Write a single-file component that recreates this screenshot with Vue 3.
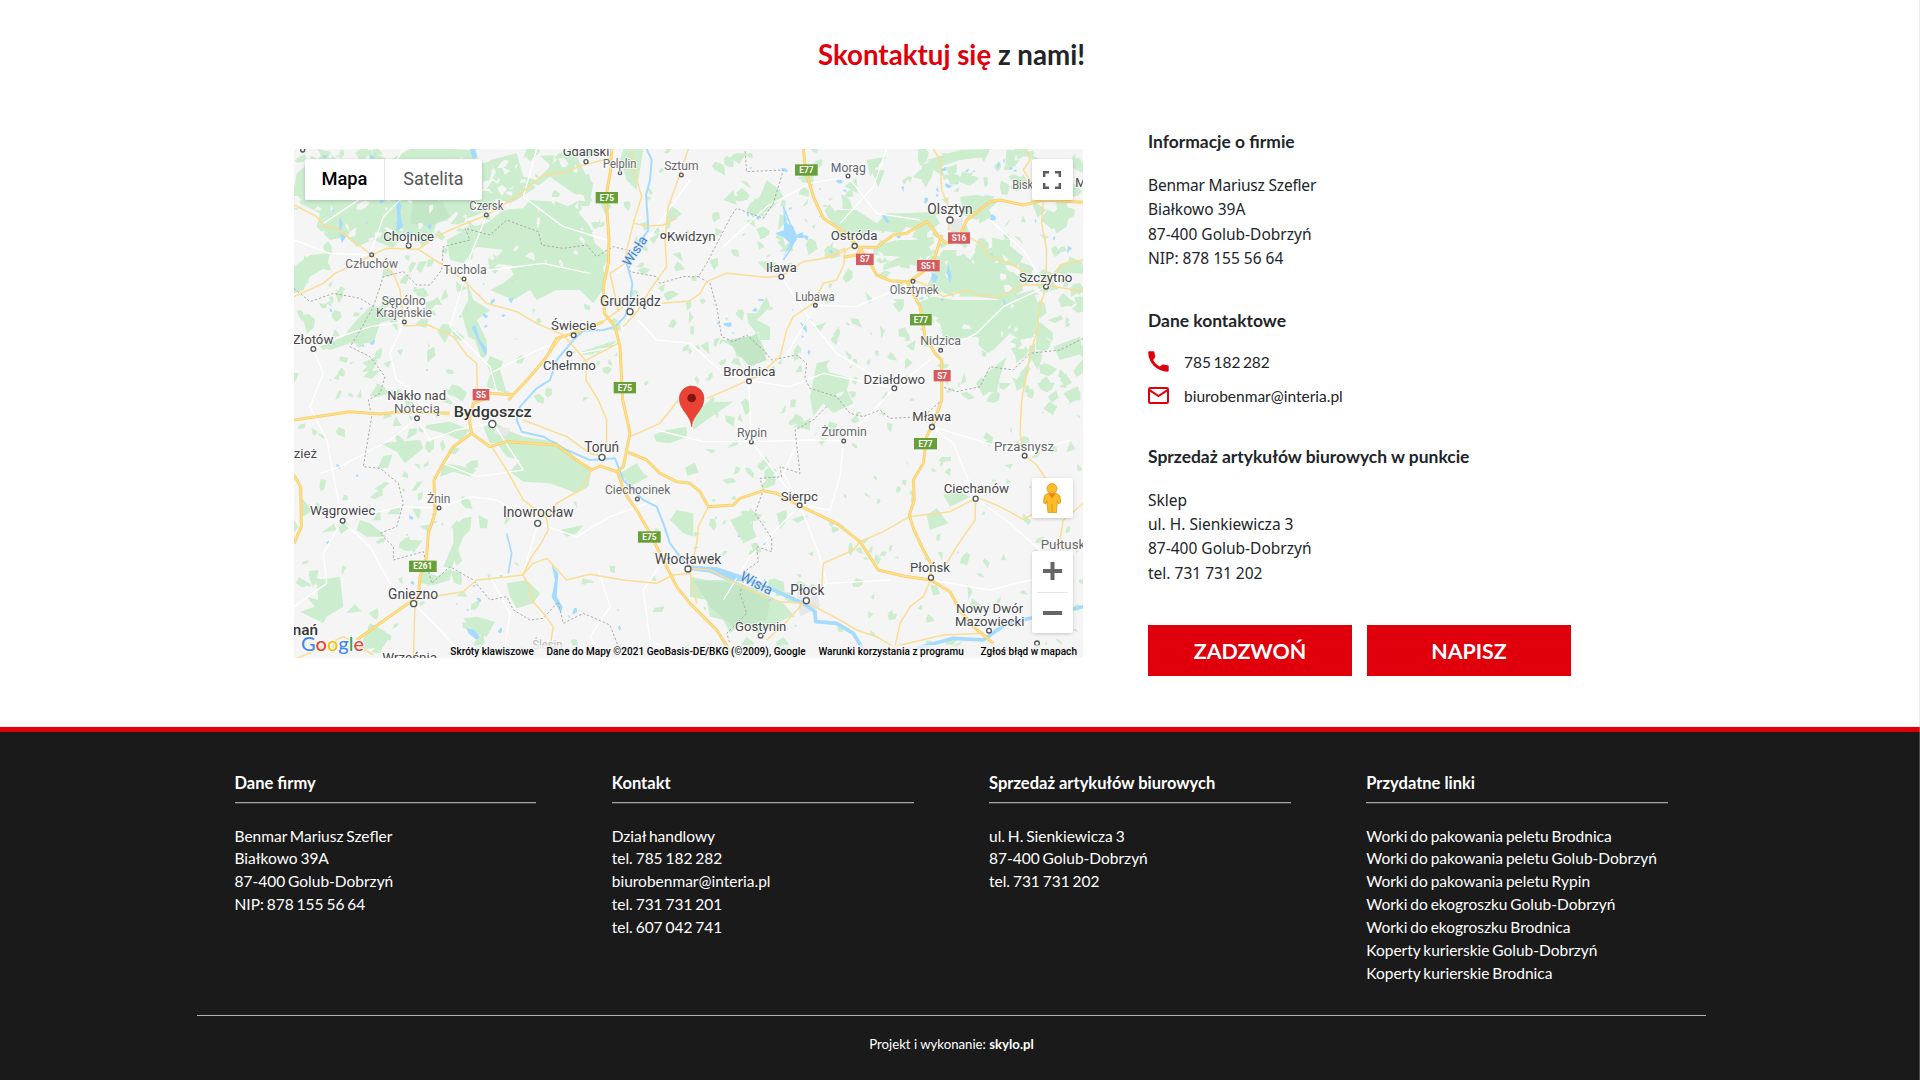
<script setup>
const major = [
  'M965 27L962 90L948 170L957 300L955 370L940 440L943 520L975 560L990 620L998 780L1016 860L1020 880L1010 930L1000 980L982 995L1005 1060L1040 1110L1080 1180L1120 1260L1160 1340L1200 1390L1240 1430L1280 1470L1325 1540',
  'M600 770L550 790L538 840L545 880L600 920L650 905L800 915L860 960L905 990L930 978L980 995',
  'M545 880L490 920L460 970L432 1020L435 1120L415 1180L410 1250L390 1310L385 1370L340 1400L270 1450L200 1500',
  'M12 840L180 815L270 822L340 815L480 820M12 1005L32 1040L34 1160L12 1210',
  'M655 780L720 710L770 650L800 595L850 580L940 545M600 760L670 765',
  'M1010 935L1070 960L1110 1000L1160 1025L1200 1030L1230 1055L1255 1100L1330 1095L1350 1075L1420 1052L1460 1060L1530 1098L1640 1150L1710 1205L1765 1290L1840 1308L1922 1320L1980 1355L2010 1410L2050 1460L2110 1510',
  'M1540 27L1547 90L1570 170L1600 235L1660 275L1710 325L1740 370L1760 405L1800 422L1850 425L1890 500L1905 590L1935 640L1955 660L1955 780L1935 840L1910 890L1900 970L1870 1020L1873 1080L1858 1125L1870 1165L1900 1230L1922 1270V1320',
  'M1660 352L1700 345L1715 322H1760L1810 285L1850 280L1880 262L1910 245L1925 260L1940 285L1970 310L2010 300M2013 280L2030 240L2100 185L2130 180L2200 195L2260 180L2380 187M1955 285L1935 350L1900 395L1855 425'
]
const minor = [
  'M12 195L80 230L105 260L140 265L200 310L245 345L200 370L135 400L100 430L12 470',
  'M245 345L290 325L385 328L430 295L480 270L590 225L680 170L760 105L830 95L880 75L960 55',
  'M385 328L450 370L520 420L590 490L680 515L740 550L820 585L890 665L888 720L925 780L950 840V930',
  'M245 345L310 400L330 450L343 558L415 555L490 590L530 645L560 670L562 755',
  'M1025 27L1035 100L1055 170L1030 250L1010 330L1005 370L960 400L985 510M1195 27L1160 130L1135 200L1125 300L1130 380L1080 450L1045 510L1000 560',
  'M1030 250L1070 258L1120 255L1160 235M1115 490L1200 483L1230 460L1250 425L1310 400L1430 412L1475 408L1540 365L1630 350L1690 318',
  'M1665 325L1663 370L1640 420L1600 430L1570 490L1510 530L1490 570L1470 650L1400 710L1320 745L1250 775M1665 325L1600 355',
  'M1930 27L1950 60L1955 150L1980 210L1975 270M2210 27L2220 60L2200 90L2260 180L2255 250L2270 330L2268 440L2250 500L2240 580L2220 640L2210 700L2195 780L2190 880L2204 947L2240 975L2270 1020',
  'M2015 280L2070 310L2100 350L2160 370L2210 400M1870 420L1920 440L1960 470L2030 450L2060 465L2130 470L2200 435L2268 435L2380 455M2270 410L2300 400L2310 375L2380 360',
  'M605 920L650 990L700 1080L770 1135L775 1170L750 1215L725 1250L698 1305L720 1340L725 1380L760 1420L790 1460L780 1520M773 1130L800 1090L870 1050L905 990',
  'M698 1305L640 1312L560 1320L520 1355L400 1375M698 1305L730 1270L770 1255L830 1320L900 1303L1000 1320L1100 1330L1150 1305L1200 1300M375 1390L370 1555M12 1560L160 1490L250 1545',
  'M1165 780L1110 850L1020 890M700 840L830 890L900 940L935 948M880 665L985 610',
  'M2057 1075L1980 1115L1858 1130L1780 1175L1710 1205L1690 1230L1600 1270L1595 1340M2057 1075L2055 1140L2000 1220L1970 1270M2070 1075L2130 1100L2200 1138L2250 1110',
  'M1922 1320L1900 1370L1860 1400L1830 1450L1815 1520M1555 1390L1650 1440L1700 1470L1760 1490L1810 1520L1960 1485L2080 1480M1540 1390L1480 1455L1430 1500',
  'M1255 1100L1225 1160L1220 1210L1200 1300L1220 1390M2310 1200L2320 1140L2380 1090M940 545L1000 500M770 650L820 585M1200 1285L1260 1290L1320 1320L1400 1360L1470 1385L1540 1390'
]
const local = [
  'M12 300L120 340L240 345L280 230L330 180L420 150L600 150M522 418L600 390L760 370L900 400M522 418L540 350L590 226M343 545L300 640L320 720L400 770L380 835L420 900L500 870L600 850',
  'M70 627L150 590L240 560L343 545M70 627L100 700L60 800L110 900L157 1142M381 835L300 900L150 980L90 1000M157 1142L240 1220L300 1330L371 1390L460 1480L520 1555M157 1142L100 1240L110 1330L12 1400M447 1104L330 1100L157 1142M447 1104L540 1070L620 1080L743 1150L860 1190L960 1130L1100 1080',
  'M743 1150L700 1300M1020 515L1100 600L1200 610L1300 700L1376 722L1500 740L1600 700L1813 745L1950 635M1020 515L980 620L840 645M1474 410L1560 540L1640 640L1813 745M1577 496L1700 500L1870 425M1376 722L1384 905L1240 905L1100 870M1384 905L1530 1095L1380 1250L1300 1380M1384 905L1560 900L1661 903L1760 800L1813 745',
  'M1661 903L1650 1010L1620 1110L1530 1095M1526 900L1480 1000L1530 1095M1926 860L1990 910L2057 1075M1926 860L2060 900L2204 947M2204 947L2340 900M2268 440L2140 500L2060 580L1950 635M2057 1075L2160 1150L2260 1240M1922 1320L2100 1350L2260 1310M1549 1380L1610 1330L1800 1320M1530 1095L1590 1250L1610 1330M1577 496L1480 660M1674 110L1560 130L1430 200L1300 320M1674 110L1760 220L1890 240M1790 27L1750 140L1650 250M2100 240L2200 330L2268 440',
  'M852 586L720 640L600 700M523 418L480 560L600 680L620 755M1200 120L1050 330L980 400M340 27L280 130L100 250M740 27L700 170L820 260L950 300M610 850L700 990L560 1010L460 970M925 1290L960 1400L900 1490L940 1555M600 1310L660 1420L640 1555M1120 1260L1060 1350L1080 1500L1180 1555'
]
const wislaUpper = 'M1070 27L1085 60L1080 120L1068 165L1072 220L1075 270L1040 320L1010 370L1027 430L1020 490L1005 530L975 560L940 570L880 572L850 600L800 660L780 720L740 745L690 800L680 840L695 875L760 890L830 930L900 960L975 955L1000 1020L1060 1080L1100 1100L1120 1150L1140 1210L1170 1250L1200 1282'
const wislaLower = 'M1200 1282L1280 1287L1350 1310L1440 1345L1540 1390L1575 1415L1577 1445L1640 1450L1690 1480L1720 1530M1880 1525L1990 1495L2080 1500L2150 1450L2380 1400'
const streams = 'M650 1180L665 1240L655 1300M1480 200L1500 250L1520 290L1500 330L1480 360'
const borders = [
  'M12 445L60 485L130 460L210 475L250 500L200 590L180 620L240 650L285 710L270 760L235 780L245 830L220 980L270 985L325 1030L340 1090L320 1160L270 1180L310 1220L310 1260L400 1235L425 1330L480 1280L550 1320L600 1380L650 1370L670 1410L720 1440L760 1435L805 1385L820 1450L880 1420L960 1455L985 1520',
  'M250 500L280 410L340 395L380 435L420 435L455 390L460 320L540 300L525 265L600 285L650 240L745 275L755 315L820 325L890 315L920 350L970 320L1010 330L1020 395L1100 410L1110 430L1180 410L1225 410L1250 370L1325 225L1340 205L1420 235L1450 190L1480 90L1370 95L1365 27',
  'M1225 410L1260 430L1280 500L1295 590L1330 605L1370 585L1420 630L1445 660L1520 645L1550 670L1545 715L1560 745L1640 770L1680 820L1720 830L1770 810L1800 835L1900 830L1955 780L1955 740L2000 755L2070 740L2100 680L2170 690L2220 640L2310 630L2380 595',
  'M1610 800L1570 840L1515 870L1530 1000L1470 980L1475 1010L1410 1015L1420 1050L1395 1120L1445 1195L1445 1235L1400 1220L1405 1265L1370 1290L1350 1360L1370 1420L1310 1480L1320 1510'
]
// Hand-traced woodland: the large complexes of the region.
const forests = [
  'M20 100L70 60L110 95L170 70L200 100L250 40L300 60L360 27L480 27L540 30L580 70L610 60L600 120L560 130L620 170L600 210L520 240L500 215L440 250L420 300L400 320L370 290L330 290L310 325L250 300L200 320L170 290L120 300L80 260L90 220L30 190L12 150Z',
  'M600 60L680 40L700 110L740 120L800 60L850 27L890 110L910 130L900 180L850 160L780 110L740 140L680 180L660 190L600 170L630 120Z',
  'M545 260L590 250L640 210L700 205L720 180L800 185L860 210L900 260L915 310L960 350L940 380L945 440L910 490L870 450L800 450L740 480L720 450L670 480L600 450L640 430L700 380L600 370L640 330L560 320L520 370L480 360L470 300Z',
  'M530 420L550 480L600 510L560 540L590 600L592 640L575 660L555 600L535 590L515 520L535 480ZM590 670L600 648L640 665L630 690L650 760L590 740L600 700Z',
  'M12 380L60 345L120 340L110 380L60 410L40 450L12 460ZM200 540L240 500L280 500L300 540L270 550L250 610L180 610L120 630L90 620L160 590Z',
  'M580 860L620 850L650 870L700 890L800 905L840 940L905 990L895 1040L860 1060L780 1030L700 1025L660 995L690 960L650 950L620 910L600 910Z',
  'M410 855L480 845L540 870L510 900L460 880L405 865ZM270 910L390 900L400 925L345 970L320 935ZM990 1000L1040 970L1060 1000L1075 1010L1020 1040L1040 1060Z',
  'M520 1135L545 1130L540 1170L520 1190L500 1240L485 1285L460 1280L490 1210L490 1160ZM565 1125L595 1140L590 1165L570 1165ZM395 1290L440 1310L485 1285L480 1320L430 1335L390 1330Z',
  'M80 1320L150 1310L160 1400L110 1430L100 1450L30 1415L75 1400L50 1370L85 1380ZM650 1330L710 1320L750 1360L730 1390L680 1405L660 1370ZM230 1480L240 1450L280 1470L300 1490L280 1520L200 1530Z',
  'M1200 1310L1250 1320L1330 1320L1400 1350L1480 1390L1515 1430L1500 1430L1400 1480L1370 1440L1320 1480L1300 1440L1260 1430L1250 1380L1200 1370ZM1140 1140L1160 1110L1210 1120L1210 1190L1180 1180Z',
  'M1370 210L1390 235L1440 210L1480 170L1470 150L1430 120L1410 170L1380 190ZM1370 520L1400 520L1430 470L1440 500L1400 540L1420 560L1400 580L1375 550Z',
  'M1290 600L1380 600L1400 575L1430 640L1410 670L1400 660L1340 650L1330 620ZM1580 670L1620 660L1600 690L1680 715L1670 750L1690 790L1630 820L1600 790L1560 840L1560 870L1510 860L1570 830L1560 770Z',
  'M1620 240L1640 210L1700 210L1760 250L1790 220L1850 220L1930 215L1950 250L1910 280L1850 260L1830 280L1760 270L1700 290L1650 270Z',
  'M1750 320L1820 300L1870 300L1930 290L1935 340L1910 350L1900 385L1850 370L1780 390L1780 375L1830 350L1750 345Z',
  'M1930 380L1960 330L2010 330L2040 360L2070 315L2140 350L2150 390L2190 410L2200 450L2150 480L2060 470L1990 470L1940 450Z',
  'M1880 490L1930 470L1990 480L2120 480L2230 450L2250 510L2230 590L2190 600L2160 580L2110 630L2060 590L1960 600L1950 550L1910 545Z',
  'M1910 60L2010 30L2100 27L2090 50L2010 60L1950 80ZM2010 170L2060 165L2130 180L2060 240L2020 225ZM2270 220L2340 210L2330 260L2300 280Z',
  'M2090 700L2150 650L2130 710L2120 760L2070 750ZM2290 620L2370 590L2380 640L2310 660ZM1210 810L1270 785L1330 785L1250 840L1210 870Z',
  'M1960 1065L2000 1050L2040 1070L1980 1100ZM1910 1125L1940 1105L1975 1150L1920 1170ZM1460 1120L1490 1110L1490 1140L1470 1170ZM1320 1140L1370 1120L1400 1190L1360 1210ZM860 640L980 600L960 625L890 645Z',
  'M460 970L500 975L560 990L540 1010L490 995L450 1010ZM210 1140L240 1150L290 1190L230 1190L200 1170ZM520 1435L560 1430L615 1445L590 1490L550 1480ZM810 1170L880 1155L860 1180L830 1190ZM1090 885L1130 870L1190 860L1190 890L1140 910L1100 905Z',
  'M1000 27L1060 27L1050 90L1040 150L1010 120L990 60ZM1730 60L1790 50L1760 80L1740 110ZM1300 180L1340 195L1330 150ZM2080 330L2150 310L2200 350L2180 380L2120 370ZM1400 540L1440 560L1440 600L1410 600Z'
]
// Deterministic scatter: small clearings and copses between the large woods.
let seed = 41
const rnd = () => ((seed = (seed * 16807) % 2147483647) / 2147483647)
const blob = (x, y, r) => {
  const n = 3 + Math.floor(rnd() * 4)
  const stretch = 0.45 + rnd() * 0.5
  const tilt = rnd() * 3
  let d = ''
  for (let i = 0; i < n; i++) {
    const a = ((i + rnd() * 0.5) / n) * 6.283
    const q = r * (0.45 + rnd() * 0.95)
    const px = Math.cos(a) * q
    const py = Math.sin(a) * q * stretch
    const gx = x + px * Math.cos(tilt) - py * Math.sin(tilt)
    const gy = y + px * Math.sin(tilt) + py * Math.cos(tilt)
    d += (i ? 'L' : 'M') + gx.toFixed(0) + ' ' + gy.toFixed(0)
  }
  return d + 'Z'
}
const scatter = (zones) => zones.map(([x, y, w, h, n, r]) => {
  let d = ''
  for (let i = 0; i < n; i++) d += blob(x + rnd() * w, y + rnd() * h, r * (0.4 + rnd() * 0.9))
  return d
}).join('')
const copses = scatter([
  [12, 27, 580, 330, 70, 24], [600, 27, 350, 450, 45, 24], [12, 350, 500, 420, 64, 21],
  [600, 480, 600, 300, 24, 16], [1000, 27, 350, 500, 38, 19], [1350, 27, 550, 380, 56, 24],
  [1880, 27, 490, 400, 85, 28], [2080, 400, 300, 380, 60, 25], [1560, 430, 500, 350, 46, 18],
  [1200, 500, 360, 300, 24, 19], [12, 780, 540, 350, 36, 22], [12, 1130, 560, 420, 36, 23],
  [580, 1050, 620, 480, 14, 15], [1150, 780, 500, 400, 32, 19], [1600, 780, 780, 480, 56, 16],
  [1500, 1230, 880, 320, 40, 17], [1200, 1120, 300, 400, 22, 20]
])
const clearings = scatter([
  [20, 50, 560, 260, 46, 18], [600, 60, 320, 330, 26, 15], [540, 430, 90, 220, 4, 9],
  [1620, 210, 300, 180, 8, 12], [1920, 300, 320, 300, 18, 13], [1300, 590, 380, 180, 8, 11]
])
const ponds = scatter([
  [100, 40, 500, 280, 14, 9], [560, 420, 120, 220, 8, 8], [1360, 60, 360, 300, 18, 10],
  [1800, 60, 540, 430, 30, 10], [1230, 480, 560, 180, 10, 9], [60, 960, 400, 420, 12, 8],
  [500, 1300, 500, 200, 10, 9], [1200, 1080, 300, 300, 6, 7], [120, 500, 400, 280, 8, 7]
])
const lakes = 'M540 27H556L562 50L548 56ZM318 180H330L332 230L340 260L318 275L322 240ZM148 230L158 250L150 280L168 290L155 310L148 270ZM545 560L556 555L570 600L590 625L588 650L575 625ZM1480 190L1490 250L1510 260L1520 300L1490 335L1475 360L1500 310L1480 290L1455 280L1482 270ZM1780 220L1800 245L1790 250L1776 228ZM1975 370L1985 410L1980 430L1970 400ZM1925 395L1945 410L1935 430L1925 420ZM1530 545L1550 560L1550 578L1538 565ZM785 1275L805 1300L800 1370L818 1400L812 1420L785 1370L795 1320ZM530 1465L550 1468L570 1490L560 1500L535 1480ZM1200 1280L1280 1283L1350 1308L1360 1325L1310 1320L1260 1298L1200 1290Z'

// text, centre x, baseline y, size, drawn width, tone
const labels = [
  ['Gdański', 888, 48, 40, 140, 2], ['Pelplin', 989, 84, 36, 100, 1], ['Czersk', 589, 209, 36, 102, 1],
  ['Chojnice', 356, 304, 40, 152, 2], ['Człuchów', 245, 384, 38, 158, 1], ['Tuchola', 525, 403, 39, 130, 1],
  ['Sępólno', 341, 495, 38, 132, 1], ['Krajeńskie', 342, 531, 38, 168, 1], ['Złotów', 69, 612, 40, 122, 2],
  ['Świecie', 851, 569, 40, 136, 2], ['Grudziądz', 1021, 499, 42, 182, 2], ['Chełmno', 838, 689, 40, 158, 2],
  ['Sztum', 1174, 91, 36, 103, 1], ['Kwidzyn', 1204, 303, 40, 146, 2], ['Morąg', 1675, 95, 38, 105, 1],
  ['Ostróda', 1692, 300, 40, 140, 2], ['Olsztyn', 1980, 221, 42, 136, 2], ['Iława', 1474, 395, 40, 92, 2],
  ['Lubawa', 1575, 484, 37, 118, 1], ['Olsztynek', 1872, 462, 37, 146, 1], ['Szczytno', 2267, 425, 40, 160, 2],
  ['Nidzica', 1952, 616, 38, 122, 1], ['Brodnica', 1378, 709, 40, 156, 2], ['Działdowo', 1813, 731, 40, 185, 2],
  ['Nakło nad', 380, 780, 40, 176, 2], ['Notecią', 381, 819, 40, 138, 1], ['Bydgoszcz', 608, 830, 46, 234, 3],
  ['Toruń', 935, 936, 42, 105, 2], ['Ciechocinek', 1043, 1062, 37, 196, 1], ['Żnin', 446, 1089, 37, 70, 1],
  ['Wągrowiec', 158, 1125, 40, 196, 2], ['Inowrocław', 745, 1131, 42, 212, 2], ['Włocławek', 1194, 1271, 42, 200, 2],
  ['Gniezno', 369, 1376, 42, 150, 2], ['Ślesin', 772, 1527, 36, 90, 0], ['Września', 359, 1566, 39, 164, 2],
  ['Rypin', 1386, 891, 38, 90, 1], ['Żuromin', 1662, 888, 38, 136, 1], ['Mława', 1925, 844, 40, 116, 2],
  ['Przasnysz', 2202, 932, 40, 180, 1], ['Ciechanów', 2059, 1058, 40, 196, 2], ['Sierpc', 1528, 1083, 40, 112, 2],
  ['Pułtusk', 2319, 1227, 39, 134, 1], ['Płońsk', 1920, 1295, 40, 120, 2], ['Płock', 1552, 1364, 42, 102, 2],
  ['Gostynin', 1412, 1473, 39, 154, 2], ['Nowy Dwór', 2099, 1419, 40, 202, 2], ['Mazowiecki', 2099, 1458, 40, 208, 2],
  ['zież', 46, 954, 39, 70, 2], ['Bisk', 2198, 147, 38, 63, 1], ['M', 2372, 142, 38, 32, 2], ['nań', 46, 1484, 44, 76, 3]
]
const towns = [
  [38, 30, 6], [888, 65, 6], [990, 99, 5], [589, 225, 5.5], [356, 317, 7], [245, 344, 5.5], [522, 417, 5.5], [343, 546, 5.5],
  [70, 627, 7], [851, 586, 7], [1020, 515, 9], [838, 641, 7], [1174, 105, 5.5], [1120, 288, 7], [1674, 108, 5.5],
  [1694, 318, 7.5], [1980, 240, 9], [1474, 410, 7], [1576, 496, 5.5], [1869, 424, 5.5], [2268, 440, 7], [1952, 631, 5.5],
  [1377, 724, 7], [1813, 745, 7], [381, 835, 7], [607, 852, 10.5], [936, 952, 9], [1042, 1077, 5.5], [447, 1104, 5.5],
  [158, 1142, 7], [743, 1150, 9], [1194, 1287, 9], [371, 1391, 9], [1384, 906, 5.5], [1661, 903, 5.5], [1926, 861, 7.5],
  [2204, 947, 7], [2057, 1076, 7.5], [1529, 1096, 7], [1923, 1313, 7.5], [1549, 1382, 9], [1412, 1487, 7], [2097, 1472, 7], [2241, 1510, 7]
]
const shields = [
  ['E75', 917, 156, 67, 1], ['E77', 1515, 73, 68, 1], ['E75', 971, 726, 67, 1], ['S5', 548, 747, 50, 0],
  ['S16', 1974, 277, 66, 0], ['S7', 1698, 341, 53, 0], ['S51', 1881, 360, 68, 0], ['E77', 1860, 522, 65, 1],
  ['S7', 1931, 690, 51, 0], ['E77', 1872, 894, 69, 1], ['E75', 1044, 1174, 68, 1], ['E261', 357, 1262, 83, 1]
]
const footer = [
  { title: 'Dane firmy', lines: ['Benmar Mariusz Szefler', 'Białkowo 39A', '87-400 Golub-Dobrzyń', 'NIP: 878 155 56 64'] },
  { title: 'Kontakt', lines: ['Dział handlowy', 'tel. 785 182 282', 'biurobenmar@interia.pl', 'tel. 731 731 201', 'tel. 607 042 741'] },
  { title: 'Sprzedaż artykułów biurowych', lines: ['ul. H. Sienkiewicza 3', '87-400 Golub-Dobrzyń', 'tel. 731 731 202'] },
  { title: 'Przydatne linki', lines: ['Worki do pakowania peletu Brodnica', 'Worki do pakowania peletu Golub-Dobrzyń', 'Worki do pakowania peletu Rypin', 'Worki do ekogroszku Golub-Dobrzyń', 'Worki do ekogroszku Brodnica', 'Koperty kurierskie Golub-Dobrzyń', 'Koperty kurierskie Brodnica'] }
]
</script>

<template>
  <div class="page">
    <main class="contact">
      <h2><span>Skontaktuj się</span> z nami!</h2>
      <div class="cols">
        <div class="map">
          <svg class="canvas" viewBox="12 27 2367 1527" preserveAspectRatio="none">
            <rect x="0" y="0" width="2400" height="1600" fill="#f5f5f5" />
            <g fill="#cdedcf">
              <path v-for="(d, i) in forests" :key="i" :d="d" />
              <path :d="copses" />
            </g>
            <path d="M370 180L440 150L480 230L420 260L360 250ZM1310 600L1400 585L1430 660L1380 680ZM1210 1320L1330 1330L1440 1380L1430 1440L1330 1460L1260 1400Z" fill="#c2e6c6" />
            <path :d="clearings" fill="#f5f5f5" />
            <path :d="ponds + lakes" fill="#a5dbff" />
            <path d="M1975 240L2020 235L2015 280L1980 270ZM1520 1350L1580 1340L1590 1400L1530 1430ZM620 860L660 865L650 890L610 880Z" fill="#e8e8e8" />
            <g fill="none" stroke-linejoin="round">
              <path v-for="(d, i) in local" :key="'l' + i" :d="d" stroke="#fff" stroke-width="4" />
              <path v-for="(d, i) in borders" :key="'b' + i" :d="d" stroke="#a9a9ab" stroke-width="3" stroke-dasharray="7 6" />
              <path :d="wislaUpper" stroke="#a5dbff" stroke-width="6" />
              <path :d="wislaLower" stroke="#a5dbff" stroke-width="11" />
              <path :d="streams" stroke="#a5dbff" stroke-width="5" />
              <path v-for="(d, i) in minor" :key="'m' + i" :d="d" stroke="#fbdd94" stroke-width="4.5" />
              <path v-for="(d, i) in major" :key="'c' + i" :d="d" stroke="#f9d06a" stroke-width="9" />
              <path v-for="(d, i) in major" :key="'f' + i" :d="d" stroke="#fde08d" stroke-width="4" />
            </g>
            <g fill="#fff" stroke="#55565a" stroke-width="4">
              <circle v-for="(t, i) in towns" :key="i" :cx="t[0]" :cy="t[1]" :r="t[2]" />
            </g>
            <g class="labels">
              <text v-for="(l, i) in labels" :key="i" :class="'tone' + l[5]" :x="l[1]" :y="l[2]" :font-size="l[3]" :textLength="l[4]" lengthAdjust="spacingAndGlyphs">{{ l[0] }}</text>
              <text class="river" transform="translate(1046 340) rotate(-56)" font-size="40">Wisła</text>
              <text class="river" transform="translate(1393 1342) rotate(27)" font-size="42">Wisła</text>
            </g>
            <g v-for="(s, i) in shields" :key="'s' + i">
              <rect :x="s[1]" :y="s[2]" :width="s[3]" height="34" :fill="s[4] ? '#689f38' : '#d85a5f'" />
              <text class="shield" :x="s[1] + s[3] / 2" :y="s[2] + 26">{{ s[0] }}</text>
            </g>
            <path d="M1205 861C1202 823 1168 812 1168 775A37 37 0 0 1 1242 775C1242 812 1208 823 1205 861Z" fill="#ea4335" stroke="#c5362b" stroke-width="1.500" />
            <circle cx="1205" cy="774" r="13" fill="#811411" />
          </svg>
          <div class="types"><b>Mapa</b><span>Satelita</span></div>
          <button class="ctl full" aria-label="fullscreen">
            <svg width="18" height="18" viewBox="0 0 18 18"><path d="M1.2 6V1.2H6M12 1.2h4.8V6M16.8 12v4.8H12M6 16.8H1.2V12" fill="none" stroke="#5c5c5c" stroke-width="2.4" /></svg>
          </button>
          <button class="ctl peg" aria-label="street view">
            <svg width="18" height="30" viewBox="0 0 18 30"><path d="M4.2 10.5h9.6L17 13l.6 7-2.4.8-.9-3-.9 11.9H5L3.900 17.800 3 20.800.6 20 1.200 13Z" fill="#fbbc27" stroke="#d8951f" stroke-width=".8" /><path d="M9 21v8" stroke="#d8951f" stroke-width="1" /><path d="M5.200 10.500h7.600L9 15.500Z" fill="#e8861b" /><circle cx="9" cy="5.600" r="5" fill="#fbbc27" stroke="#d8951f" stroke-width=".8" /></svg>
          </button>
          <div class="zoom">
            <svg width="19" height="18" viewBox="0 0 19 18"><path d="M0 9h19M9.500 0v18" stroke="#666" stroke-width="4" /></svg>
            <i></i>
            <svg width="19" height="18" viewBox="0 0 19 18"><path d="M0 9h19" stroke="#666" stroke-width="4" /></svg>
          </div>
          <div class="google"><span class="b">G</span><span class="r">o</span><span class="y">o</span><span class="b">g</span><span class="g">l</span><span class="r">e</span></div>
          <div class="legal">
            <span>Skróty klawiszowe</span><span>Dane do Mapy ©2021 GeoBasis-DE/BKG (©2009), Google</span><span>Warunki korzystania z programu</span><span class="report">Zgłoś błąd w mapach</span>
          </div>
        </div>
        <div class="info">
          <h3>Informacje o firmie</h3>
          <p><span class="name">Benmar Mariusz Szefler</span><br />Białkowo 39A<br />87-400 Golub-Dobrzyń<br />NIP: 878 155 56 64</p>
          <h3>Dane kontaktowe</h3>
          <div class="row first">
            <svg width="21" height="21" viewBox="0 0 21 21"><path d="M1 .3H5.400C6 .3 6.300.6 6.400 1.200C6.500 2.700 6.800 4 7.200 5.200C7.400 5.700 7.300 6.100 6.900 6.500L5.200 9.100C6.600 12 8.900 14.300 11.900 15.600L14.300 13.800C14.700 13.400 15.100 13.300 15.600 13.500C16.900 13.900 18.200 14.200 19.700 14.300C20.400 14.400 20.700 14.700 20.700 15.300V19.600C20.700 20.300 20.300 20.700 19.600 20.700C9 20.600.3 12 .2 1.300C.2.700.5.300 1 .3Z" fill="#df000b" /></svg>
            <span>785 182 282</span>
          </div>
          <div class="row">
            <svg width="21" height="17" viewBox="0 0 21 17"><rect x="1" y="1" width="19" height="15" rx="1.200" fill="none" stroke="#df000b" stroke-width="2" /><path d="M1.500 3.200L10.500 9L19.500 3.200" fill="none" stroke="#df000b" stroke-width="2" /></svg>
            <span>biurobenmar@interia.pl</span>
          </div>
          <h3 class="shop">Sprzedaż artykułów biurowych w punkcie</h3>
          <p class="address">Sklep<br />ul. H. Sienkiewicza 3<br />87-400 Golub-Dobrzyń<br />tel. 731 731 202</p>
          <div class="btns"><a>ZADZWOŃ</a><a>NAPISZ</a></div>
        </div>
      </div>
    </main>
    <footer>
      <div class="fcols">
        <section v-for="c in footer" :key="c.title">
          <h4>{{ c.title }}</h4>
          <div v-for="l in c.lines" :key="l" class="line">{{ l }}</div>
        </section>
      </div>
      <div class="made">Projekt i wykonanie: <b>skylo.pl</b></div>
    </footer>
  </div>
</template>

<style>
body { margin: 0; background: #fff; overflow: hidden; }
</style>
<style scoped>
.page { position: relative; width: 1920px; height: 1080px; overflow: hidden; display: flex; flex-direction: column; font-family: Lato, sans-serif; color: #212529; }
.page::after { content: ''; position: absolute; right: 0; top: 0; width: 1px; height: 100%; background: rgba(190,190,190,.3); }
.contact { height: 727px; box-sizing: border-box; border-bottom: 1px solid #f0eaea; }
h2 { margin: 0; padding-top: 38px; width: 1903px; text-align: center; font-size: 27.700px; line-height: 34px; font-weight: 700; }
h2 span { color: #df000b; }
.cols { display: flex; padding: 58px 0 0 294px; }
.map { position: relative; width: 789px; height: 509px; margin-top: 19px; overflow: hidden; font-family: Roboto, sans-serif; }
.canvas { display: block; width: 789px; height: 509px; }
.labels text { text-anchor: middle; font-family: Roboto, sans-serif; paint-order: stroke; stroke: #fff; stroke-width: 6; stroke-opacity: .7; stroke-linejoin: round; }
.labels .tone0 { fill: #b5b5b5; }
.labels .tone1 { fill: #66676b; }
.labels .tone2 { fill: #45464a; }
.labels .tone3 { fill: #333; font-weight: 500; }
.labels .river { fill: #4a80c8; stroke: #d5ecfb; }
.shield { fill: #fff; font: 700 25px Roboto, sans-serif; text-anchor: middle; }
.types { position: absolute; left: 11px; top: 10px; width: 177px; height: 41px; display: flex; line-height: 40px; font-size: 18px; background: #fff; box-shadow: 0 1px 4px -1px rgba(0,0,0,.3); color: #565656; border-radius: 2px; }
.types b { width: 79px; text-align: center; color: #000; font-weight: 500; border-right: 1px solid #e6e6e6; font-size: 18.300px; }
.types span { flex: 1; text-align: center; }
.ctl { position: absolute; left: 738px; width: 41px; height: 41px; padding: 0 1px 0 0; border: 0; background: #fff; display: flex; align-items: center; justify-content: center; box-shadow: 0 1px 4px -1px rgba(0,0,0,.3); border-radius: 2px; }
.full { top: 10px; }
.peg { top: 329px; height: 40px; }
.zoom { position: absolute; left: 738px; top: 402px; width: 41px; height: 82px; background: #fff; box-shadow: 0 1px 4px -1px rgba(0,0,0,.3); border-radius: 2px; display: flex; flex-direction: column; align-items: center; justify-content: space-between; padding: 11px 0; box-sizing: border-box; }
.zoom i { width: 31px; height: 1px; background: #e6e6e6; }
.google { position: absolute; left: 7px; top: 481px; font: 500 20px/26px Lato, sans-serif; -webkit-text-stroke: 2px #fff; paint-order: stroke; }
.b { color: #4285f4; } .r { color: #ea4335; } .y { color: #fbbc05; } .g { color: #34a853; }
.legal { position: absolute; right: 0; bottom: -1px; height: 14px; padding: 0 6px 0 5px; background: rgba(245,245,245,.7); display: flex; gap: 12.700px; font-size: 10px; font-weight: 500; letter-spacing: .045px; line-height: 14px; color: #000; white-space: nowrap; }
.legal .report { margin-left: 4px; }
.info { margin-left: 65px; width: 430px; }
h3 { margin: 0; font-size: 17.450px; line-height: 24px; font-weight: 700; }
.info p { margin: 19px 0 38px; font: 15.500px/24.400px "Noto Sans", sans-serif; }
.info p.address { margin-bottom: 40px; }
.name { letter-spacing: -.2px; }
.row { display: flex; align-items: center; gap: 15px; height: 24px; margin-bottom: 10px; font-size: 15.500px; word-spacing: -1.500px; }
.first { margin-top: 17px; }
h3.shop { margin-top: 37px; }
.btns { display: flex; gap: 15px; }
.btns a { width: 204px; height: 51px; line-height: 53px; background: #df000b; color: #fff; font-size: 21.400px; font-weight: 700; text-align: center; }
footer { flex: 1; background: #1a1a1a; border-top: 5px solid #df000b; color: #fff; }
.fcols { display: flex; width: 1509px; height: 283px; margin-left: 197px; border-bottom: 1px solid #b4b4b4; }
.fcols section { width: 302px; margin: 38px 38px 0 37.500px; }
.fcols section + section { margin-left: 37.500px; }
h4 { margin: 0 0 21.500px; height: 32px; border-bottom: 1px solid #a5a5a5; box-shadow: 0 1px #404040; font-size: 16.500px; line-height: 27px; }
.line { font-size: 15.500px; line-height: 22.850px; white-space: nowrap; word-spacing: -1.100px; }
.made { width: 1903px; text-align: center; font-size: 13.200px; line-height: 20px; margin-top: 18px; }
</style>
